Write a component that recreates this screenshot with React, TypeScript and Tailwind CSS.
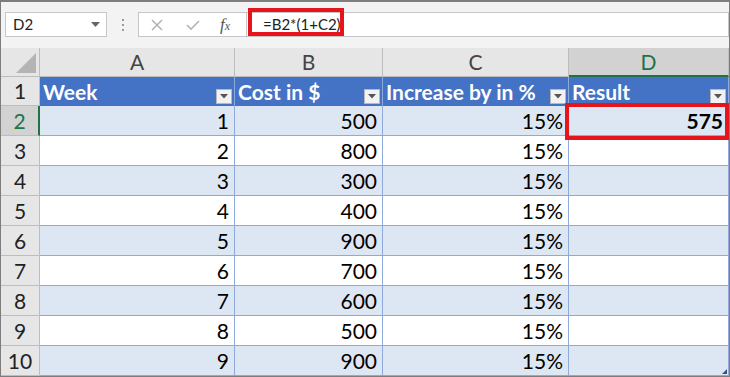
import { Fragment } from 'react';

const cols = ['A', 'B', 'C', 'D'];
const headers = ['Week', 'Cost in $', 'Increase by in %', 'Result'];
const rows = [
  { week: 1, cost: 500, result: '575' },
  { week: 2, cost: 800 },
  { week: 3, cost: 300 },
  { week: 4, cost: 400 },
  { week: 5, cost: 900 },
  { week: 6, cost: 700 },
  { week: 7, cost: 600 },
  { week: 8, cost: 500 },
  { week: 9, cost: 900 },
] as { week: number; cost: number; result?: string }[];

function FilterButton() {
  return (
    <div className="mb-[2px] mr-[2px] flex h-[15px] w-[16px] shrink-0 items-center justify-center border border-[#b9b9b9] bg-[#f2f2f2]">
      <svg width="8" height="5" viewBox="0 0 8 5">
        <path d="M0 0 L8 0 L4 4.5 Z" fill="#555" />
      </svg>
    </div>
  );
}

export default function App() {
  return (
    <div
      className="relative h-[377px] w-[730px] overflow-hidden border border-t-2 border-[#7d7d7d] bg-[#f3f3f3] text-black"
      style={{ fontFamily: 'Lato, "Noto Sans", sans-serif' }}
    >
      {/* formula bar */}
      <div className="relative flex h-[46px] items-start pl-[4px] pt-[10px]">
        <div className="flex h-[25px] w-[102px] items-center justify-between border border-[#c6c6c6] bg-white pl-[7px] pr-[6px] text-[15px] text-[#222]">
          <span>D2</span>
          <svg width="9" height="5" viewBox="0 0 9 5">
            <path d="M0 0 L9 0 L4.5 5 Z" fill="#666" />
          </svg>
        </div>
        <div className="flex h-[25px] w-[31px] flex-col items-center justify-center gap-[3px]">
          <span className="h-[2px] w-[2px] bg-[#9a9a9a]" />
          <span className="h-[2px] w-[2px] bg-[#9a9a9a]" />
          <span className="h-[2px] w-[2px] bg-[#9a9a9a]" />
        </div>
        <div className="flex h-[25px] w-[108px] items-center border border-r-0 border-[#c6c6c6] bg-white pl-[11px]">
          <svg width="14" height="14" viewBox="0 0 14 14" className="mr-[22px]">
            <path d="M2 2 L12 12 M12 2 L2 12" stroke="#b3b3b3" strokeWidth="1.5" />
          </svg>
          <svg width="14" height="12" viewBox="0 0 14 12" className="mr-[20px]">
            <path d="M1 6 L5 10 L13 2" stroke="#b3b3b3" strokeWidth="1.6" fill="none" />
          </svg>
          <span
            className="text-[17px] italic text-[#555]"
            style={{ fontFamily: '"Liberation Serif", serif' }}
          >
            f<span className="text-[12px]">x</span>
          </span>
        </div>
        <div className="flex h-[25px] flex-1 items-center border border-[#c6c6c6] bg-white pl-[16px] text-[15px] text-[#222]">
          =B2*(1+C2)
        </div>
        <div className="absolute left-[247px] top-[6px] z-10 h-[28px] w-[96px] border-[4px] border-[#e8141b]" />
      </div>

      {/* grid */}
      <div className="grid grid-cols-[39px_195px_148px_186px_160px]">
        {/* column header row */}
        <div className="relative h-[29px] border-b border-r border-[#bdbdbd] bg-[#e6e6e6]">
          <svg width="20" height="20" viewBox="0 0 20 20" className="absolute bottom-[3px] right-[3px]">
            <path d="M20 0 L20 20 L0 20 Z" fill="#b4b4b4" />
          </svg>
        </div>
        {cols.map((c) => (
          <div
            key={c}
            className={`flex h-[29px] items-center justify-center border-r text-[21px] ${
              c === 'D'
                ? 'border-b-2 border-r-[#bdbdbd] border-b-[#217346] bg-[#d2d2d2] text-[#217346]'
                : 'border-b border-[#bdbdbd] bg-[#e6e6e6] text-[#444]'
            }`}
          >
            {c}
          </div>
        ))}

        {/* row 1: table header */}
        <div className="flex h-[29px] items-center justify-center border-b border-r border-[#bdbdbd] bg-[#e6e6e6] text-[21px] text-[#222]">
          1
        </div>
        {headers.map((h) => (
          <div
            key={h}
            className="flex h-[29px] items-end justify-between border-r border-[#8eaadb] bg-[#4472c4] pl-[3px]"
          >
            <span className="self-center text-[21px] font-bold leading-none text-white">{h}</span>
            <FilterButton />
          </div>
        ))}

        {rows.map((r, i) => {
          const n = i + 2;
          const band = i % 2 === 0 ? 'bg-[#dde7f3]' : 'bg-white';
          const cell = `flex h-[30px] items-center justify-end border-b border-r border-[#8eaadb] pr-[5px] text-[21px] ${band}`;
          return (
            <Fragment key={n}>
              <div
                className={`flex h-[30px] items-center justify-center border-b border-[#bdbdbd] text-[21px] ${
                  n === 2
                    ? 'border-r-2 border-r-[#217346] bg-[#d2d2d2] text-[#217346]'
                    : 'border-r bg-[#e6e6e6] text-[#222]'
                }`}
              >
                {n}
              </div>
              <div className={cell}>{r.week}</div>
              <div className={cell}>{r.cost}</div>
              <div className={cell}>15%</div>
              <div className={`relative ${cell}`}>
                {r.result && <span className="relative z-20 font-bold">{r.result}</span>}
                {n === 2 && (
                  <div className="absolute left-[-4px] right-[-1px] top-[-3px] bottom-[-5px] z-10 border-[4px] border-[#e8141b]" />
                )}
                {n === 10 && (
                  <svg width="5" height="5" viewBox="0 0 5 5" className="absolute bottom-[1px] right-[1px]">
                    <path d="M5 0 L5 5 L0 5 Z" fill="#2f5597" />
                  </svg>
                )}
              </div>
            </Fragment>
          );
        })}
      </div>
    </div>
  );
}
